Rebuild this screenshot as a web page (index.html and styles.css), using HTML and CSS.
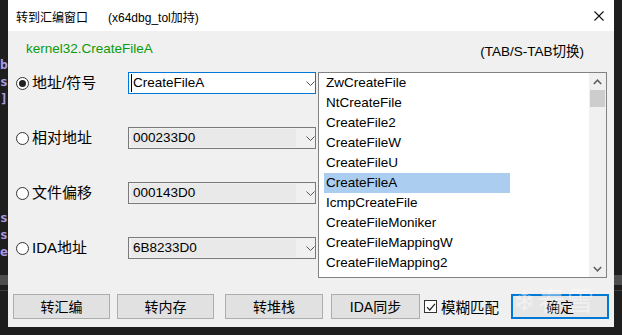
FILE: index.html
```html
<!DOCTYPE html>
<html>
<head>
<meta charset="utf-8">
<link rel="stylesheet" href="styles.css">
</head>
<body>
<div class="stage">
  <div class="editor">
    <div class="code">
      <div class="ln">b</div>
      <div class="ln">s</div>
      <div class="ln">]</div>
      <div class="ln"></div>
      <div class="ln"></div>
      <div class="ln"></div>
      <div class="ln"></div>
      <div class="ln"></div>
      <div class="ln"></div>
      <div class="ln">s</div>
      <div class="ln">s</div>
      <div class="ln">e</div>
    </div>
    <div class="hbar"></div>
    <div class="hline"></div>
  </div>

  <div class="dialog">
    <div class="titlebar">
      <span class="title-main">转到汇编窗口</span>
      <span class="title-sub">(x64dbg_tol加持)</span>
      <svg class="close" width="10" height="10" viewBox="0 0 10 10"><path d="M0.5 0.5L9.5 9.5M9.5 0.5L0.5 9.5" stroke="#111" stroke-width="1.1" fill="none"/></svg>
    </div>

    <div class="header">
      <span class="sym">kernel32.CreateFileA</span>
      <span class="hint">(TAB/S-TAB切换)</span>
    </div>

    <div class="main">
      <div class="opts">
        <div class="row">
          <div class="opt"><span class="radio checked"></span><span class="lbl">地址/符号</span></div>
          <div class="combo focus"><span class="field">CreateFileA</span><svg class="chev" width="9" height="5" viewBox="0 0 9 5"><path d="M0.5 0.5L4.5 4.5L8.5 0.5" stroke="#555" fill="none"/></svg></div>
        </div>
        <div class="row">
          <div class="opt"><span class="radio"></span><span class="lbl">相对地址</span></div>
          <div class="combo"><span class="field">000233D0</span><svg class="chev" width="9" height="5" viewBox="0 0 9 5"><path d="M0.5 0.5L4.5 4.5L8.5 0.5" stroke="#555" fill="none"/></svg></div>
        </div>
        <div class="row">
          <div class="opt"><span class="radio"></span><span class="lbl">文件偏移</span></div>
          <div class="combo"><span class="field">000143D0</span><svg class="chev" width="9" height="5" viewBox="0 0 9 5"><path d="M0.5 0.5L4.5 4.5L8.5 0.5" stroke="#555" fill="none"/></svg></div>
        </div>
        <div class="row">
          <div class="opt"><span class="radio"></span><span class="lbl">IDA地址</span></div>
          <div class="combo"><span class="field">6B8233D0</span><svg class="chev" width="9" height="5" viewBox="0 0 9 5"><path d="M0.5 0.5L4.5 4.5L8.5 0.5" stroke="#555" fill="none"/></svg></div>
        </div>
      </div>

      <div class="listbox">
        <div class="items">
          <div class="item">ZwCreateFile</div>
          <div class="item">NtCreateFile</div>
          <div class="item">CreateFile2</div>
          <div class="item">CreateFileW</div>
          <div class="item">CreateFileU</div>
          <div class="item sel">CreateFileA</div>
          <div class="item">IcmpCreateFile</div>
          <div class="item">CreateFileMoniker</div>
          <div class="item">CreateFileMappingW</div>
          <div class="item">CreateFileMapping2</div>
        </div>
        <div class="vscroll">
          <div class="arrow"><svg width="9" height="6" viewBox="0 0 9 6"><path d="M0.8 5L4.5 1.2L8.2 5" stroke="#606060" stroke-width="1.6" fill="none"/></svg></div>
          <div class="thumb"></div>
          <div class="track"></div>
          <div class="arrow"><svg width="9" height="6" viewBox="0 0 9 6"><path d="M0.8 1L4.5 4.8L8.2 1" stroke="#606060" stroke-width="1.6" fill="none"/></svg></div>
        </div>
      </div>
    </div>

    <div class="footer">
      <button class="btn b1">转汇编</button>
      <button class="btn b2">转内存</button>
      <button class="btn b3">转堆栈</button>
      <button class="btn b4">IDA同步</button>
      <label class="check"><span class="box"><svg width="10" height="10" viewBox="0 0 10 10"><path d="M1 5.2L3.8 8L9 1.8" stroke="#222" stroke-width="1.2" fill="none"/></svg></span><span class="clbl">模糊匹配</span></label>
      <button class="btn ok">确定</button>
      <div class="watermark">❄春雪</div>
    </div>
  </div>
</div>
</body>
</html>
```
FILE: styles.css
```css
* { box-sizing: border-box; }
html, body { margin: 0; padding: 0; }
body {
  width: 622px;
  height: 335px;
  overflow: hidden;
  background: #1e1e1e;
}
.stage {
  display: grid;
  width: 622px;
  height: 335px;
}
.stage > * { grid-area: 1 / 1; }

/* background editor */
.editor {
  display: flex;
  flex-direction: column;
  width: 622px;
}
.code {
  padding-top: 56px;
  font-family: "DejaVu Sans Mono", monospace;
  font-weight: bold;
  font-size: 13px;
  color: #a99be6;
}
.ln { height: 17px; line-height: 17px; padding-left: 0; }
.hbar { margin-top: 15px; height: 10px; background: #4e4e4e; }
.hline { margin-top: 5px; height: 1px; background: #3e3e3e; }

/* dialog */
.dialog {
  margin-left: 8px;
  width: 606px;
  height: 327px;
  background: #f0f0f0;
  display: flex;
  flex-direction: column;
  font-family: "Liberation Sans", "Noto Sans CJK SC", sans-serif;
  color: #000;
  position: relative;
}
.titlebar {
  height: 31px;
  background: #fff;
  display: flex;
  align-items: center;
  padding-left: 8px;
  font-size: 12px;
  padding-top: 1px;
}
.title-main { font-family: "Noto Sans CJK SC", sans-serif; }
.title-sub { margin-left: 20px; }
.close { margin-left: auto; margin-right: 10px; }

.header {
  height: 41px;
  display: flex;
  justify-content: space-between;
  align-items: flex-start;
  padding: 10px 30px 0 18px;
  font-size: 13.5px;
}
.sym { color: #0b9a0b; line-height: 16px; }
.hint { margin-top: 3px; line-height: 16px; }

.main {
  display: flex;
  height: 206px;
}
.opts {
  width: 310px;
  display: flex;
  flex-direction: column;
  gap: 33px;
}
.row {
  display: flex;
  align-items: center;
  height: 22px;
}
.opt {
  width: 120px;
  padding-left: 8px;
  display: flex;
  align-items: center;
}
.radio {
  width: 13px;
  height: 13px;
  border: 1px solid #333;
  border-radius: 50%;
  background: #fff;
  display: flex;
  align-items: center;
  justify-content: center;
  flex: none;
}
.radio.checked::after {
  content: "";
  width: 7px;
  height: 7px;
  border-radius: 50%;
  background: #222;
}
.lbl {
  margin-left: 3px;
  font-size: 15px;
  font-family: "Liberation Sans", "Noto Sans CJK SC", sans-serif;
  line-height: 18px;
}
.combo {
  width: 188px;
  height: 22px;
  border: 1px solid #7a7a7a;
  background: #f0f0f0;
  display: flex;
  align-items: center;
  padding: 1px 0 1px 2px;
}
.combo .field {
  width: 165px;
  height: 18px;
  background: #e9e9e9;
  font-size: 13.5px;
  line-height: 18px;
  padding-left: 2px;
}
.combo.focus {
  border-color: #0078d7;
  background: #fff;
}
.combo.focus .field {
  background: #fff;
  border-left: 1px solid #000;
  padding-left: 1px;
}
.chev { margin-left: 10px; margin-top: 1px; }

.listbox {
  width: 289px;
  height: 206px;
  border: 1px solid #828282;
  background: #fff;
  display: flex;
}
.items {
  flex: 1;
  padding-left: 5px;
}
.item {
  width: 186px;
  height: 20px;
  line-height: 20px;
  padding-left: 2px;
  font-size: 13.5px;
  white-space: nowrap;
}
.item.sel { background: #aacdf0; }
.vscroll {
  width: 17px;
  background: #f0f0f0;
  display: flex;
  flex-direction: column;
}
.arrow {
  height: 17px;
  display: flex;
  align-items: center;
  justify-content: center;
}
.thumb {
  height: 17px;
  margin: 0 1px;
  background: #cdcdcd;
}
.track { flex: 1; }

.footer {
  flex: 1;
  display: flex;
  align-items: flex-start;
  padding-top: 16px;
  position: relative;
}
.btn {
  height: 25px;
  background: #e1e1e1;
  border: 1px solid #adadad;
  font-family: "Liberation Sans", "Noto Sans CJK SC", sans-serif;
  font-size: 14px;
  color: #000;
  padding: 0;
  line-height: 22px;
}
.b1 { margin-left: 5px; width: 97px; }
.b2 { margin-left: 7px; width: 97px; }
.b3 { margin-left: 11px; width: 98px; }
.b4 { margin-left: 8px; width: 89px; }
.check {
  margin-left: 4px;
  height: 25px;
  display: flex;
  align-items: center;
}
.box {
  width: 13px;
  height: 13px;
  border: 1px solid #333;
  background: #fff;
  display: flex;
  align-items: center;
  justify-content: center;
}
.clbl {
  margin-left: 4px;
  font-size: 14.5px;
  font-family: "Noto Sans CJK SC", sans-serif;
}
.ok {
  margin-left: auto;
  margin-right: 5px;
  width: 98px;
  border: 2px solid #0078d7;
  background: #e5e5e5;
}
.watermark {
  position: absolute;
  left: 505px;
  top: 2px;
  font-family: "Noto Sans CJK SC", sans-serif;
  font-size: 27px;
  letter-spacing: 2px;
  color: rgba(255, 255, 255, 0.45);
  pointer-events: none;
}
```
